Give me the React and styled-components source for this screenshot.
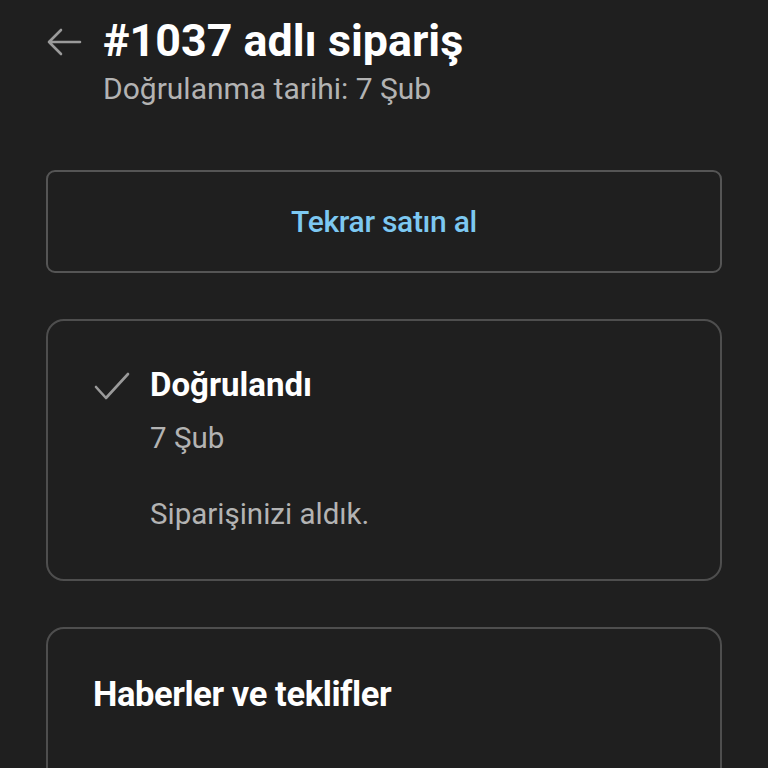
import React from 'react';
import styled, { createGlobalStyle } from 'styled-components';

const Global = createGlobalStyle`
  html, body {
    margin: 0;
    padding: 0;
    background: #1f1f1f;
    font-family: Roboto, "Noto Sans", sans-serif;
    -webkit-font-smoothing: antialiased;
  }
`;

const Page = styled.div`
  width: 768px;
  height: 768px;
  overflow: hidden;
  background: #1f1f1f;
  padding: 13px 46px 0;
  box-sizing: border-box;
`;

const Header = styled.div`
  display: flex;
  align-items: flex-start;
  gap: 21px;
`;

const BackButton = styled.button`
  background: none;
  border: none;
  padding: 0;
  margin-top: 13px;
  width: 36px;
  height: 32px;
  color: #9a9a9a;
  display: flex;
  align-items: center;
  justify-content: center;
`;

const HeadText = styled.div`
  display: flex;
  flex-direction: column;
`;

const Title = styled.h1`
  margin: 0;
  font-size: 44.8px;
  font-weight: 700;
  color: #fff;
  line-height: 56px;
`;

const Subtitle = styled.div`
  font-size: 30px;
  color: #b3b3b3;
  line-height: 40px;
`;

const OutlineButton = styled.button`
  display: block;
  width: 100%;
  height: 103px;
  margin-top: 61px;
  background: transparent;
  border: 2px solid #555;
  border-radius: 9px;
  color: #7dc8f1;
  font-family: Roboto, sans-serif;
  font-size: 30px;
  font-weight: 500;
  letter-spacing: -0.3px;
`;

const Card = styled.div`
  margin-top: ${p => p.$top}px;
  border: 2px solid #4e4e4e;
  border-radius: 18px;
  padding: ${p => p.$pad};
  min-height: ${p => p.$minH || 0}px;
  box-sizing: border-box;
`;

const StatusRow = styled.div`
  display: flex;
  gap: 20px;
`;

const CheckIcon = styled.div`
  width: 36px;
  height: 30px;
  margin-top: 7px;
  color: #9a9a9a;
`;

const StatusText = styled.div`
  display: flex;
  flex-direction: column;
`;

const StatusTitle = styled.div`
  font-size: 33px;
  font-weight: 700;
  color: #fff;
  line-height: 40px;
`;

const Muted = styled.div`
  font-size: 29.5px;
  color: #b3b3b3;
  line-height: 38px;
  margin-top: ${p => p.$top || 0}px;
`;

const SectionTitle = styled.div`
  font-size: 34.5px;
  font-weight: 700;
  color: #fff;
  line-height: 40px;
  letter-spacing: -0.4px;
`;

export default function App() {
  return (
    <>
      <Global />
      <Page>
        <Header>
          <BackButton aria-label="Geri">
            <svg width="36" height="30" viewBox="0 0 36 30" fill="none" stroke="currentColor" strokeWidth="2.6" strokeLinecap="round" strokeLinejoin="round">
              <path d="M34 15H3M15 3L3 15l12 12" />
            </svg>
          </BackButton>
          <HeadText>
            <Title>#1037 adlı sipariş</Title>
            <Subtitle>Doğrulanma tarihi: 7 Şub</Subtitle>
          </HeadText>
        </Header>

        <OutlineButton>Tekrar satın al</OutlineButton>

        <Card $top={46} $pad="44px 44px 46px 46px">
          <StatusRow>
            <CheckIcon>
              <svg width="36" height="30" viewBox="0 0 36 30" fill="none" stroke="currentColor" strokeWidth="2.6" strokeLinecap="round" strokeLinejoin="round">
                <path d="M2 15l10 11L34 2" />
              </svg>
            </CheckIcon>
            <StatusText>
              <StatusTitle>Doğrulandı</StatusTitle>
              <Muted $top={14}>7 Şub</Muted>
              <Muted $top={38}>Siparişinizi aldık.</Muted>
            </StatusText>
          </StatusRow>
        </Card>

        <Card $top={46} $pad="45px 44px 0 45px" $minH={200}>
          <SectionTitle>Haberler ve teklifler</SectionTitle>
        </Card>
      </Page>
    </>
  );
}
